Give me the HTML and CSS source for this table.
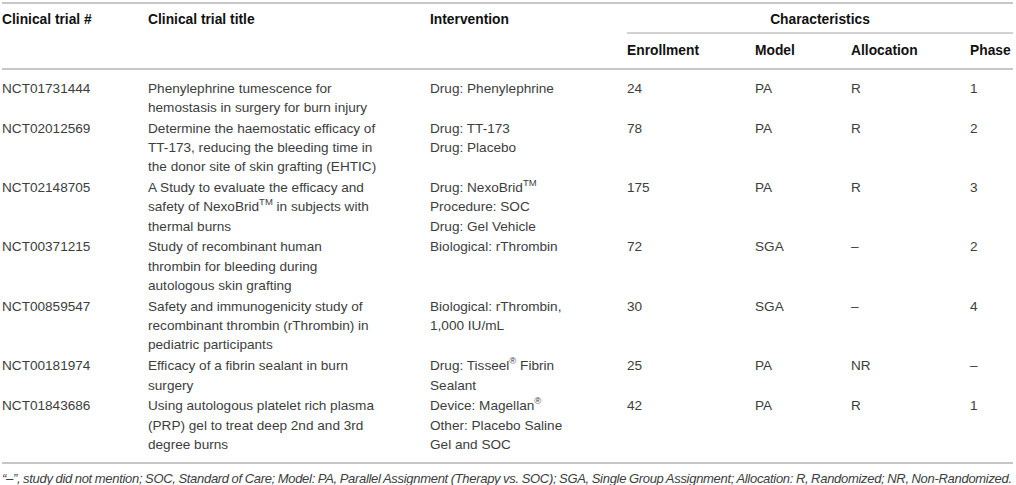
FILE: index.html
```html
<!DOCTYPE html>
<html>
<head>
<meta charset="utf-8">
<link rel="stylesheet" href="styles.css">
</head>
<body>
<div class="wrap">
<table class="trials">
  <colgroup>
    <col class="c-id"><col class="c-title"><col class="c-int"><col class="c-enr"><col class="c-model"><col class="c-alloc"><col class="c-phase">
  </colgroup>
  <thead>
    <tr class="h1">
      <th rowspan="2">Clinical trial #</th>
      <th rowspan="2">Clinical trial title</th>
      <th rowspan="2">Intervention</th>
      <th colspan="4" class="group">Characteristics</th>
    </tr>
    <tr class="h2">
      <th>Enrollment</th>
      <th>Model</th>
      <th>Allocation</th>
      <th>Phase</th>
    </tr>
  </thead>
  <tbody>
    <tr>
      <td>NCT01731444</td>
      <td class="title">Phenylephrine tumescence for<br>hemostasis in surgery for burn injury</td>
      <td class="title">Drug: Phenylephrine</td>
      <td>24</td><td>PA</td><td>R</td><td>1</td>
    </tr>
    <tr>
      <td>NCT02012569</td>
      <td class="title">Determine the haemostatic efficacy of<br>TT-173, reducing the bleeding time in<br>the donor site of skin grafting (EHTIC)</td>
      <td class="title">Drug: TT-173<br>Drug: Placebo</td>
      <td>78</td><td>PA</td><td>R</td><td>2</td>
    </tr>
    <tr>
      <td>NCT02148705</td>
      <td class="title">A Study to evaluate the efficacy and<br>safety of NexoBrid<sup>TM</sup> in subjects with<br>thermal burns</td>
      <td class="title">Drug: NexoBrid<sup>TM</sup><br>Procedure: SOC<br>Drug: Gel Vehicle</td>
      <td>175</td><td>PA</td><td>R</td><td>3</td>
    </tr>
    <tr>
      <td>NCT00371215</td>
      <td class="title">Study of recombinant human<br>thrombin for bleeding during<br>autologous skin grafting</td>
      <td class="title">Biological: rThrombin</td>
      <td>72</td><td>SGA</td><td>–</td><td>2</td>
    </tr>
    <tr>
      <td>NCT00859547</td>
      <td class="title">Safety and immunogenicity study of<br>recombinant thrombin (rThrombin) in<br>pediatric participants</td>
      <td class="title">Biological: rThrombin,<br>1,000 IU/mL</td>
      <td>30</td><td>SGA</td><td>–</td><td>4</td>
    </tr>
    <tr>
      <td>NCT00181974</td>
      <td class="title">Efficacy of a fibrin sealant in burn<br>surgery</td>
      <td class="title">Drug: Tisseel<sup>®</sup> Fibrin<br>Sealant</td>
      <td>25</td><td>PA</td><td>NR</td><td>–</td>
    </tr>
    <tr>
      <td>NCT01843686</td>
      <td class="title">Using autologous platelet rich plasma<br>(PRP) gel to treat deep 2nd and 3rd<br>degree burns</td>
      <td class="title">Device: Magellan<sup>®</sup><br>Other: Placebo Saline<br>Gel and SOC</td>
      <td>42</td><td>PA</td><td>R</td><td>1</td>
    </tr>
  </tbody>
</table>
<p class="note">“–”, study did not mention; SOC, Standard of Care; Model: PA, Parallel Assignment (Therapy vs. SOC); SGA, Single Group Assignment; Allocation: R, Randomized; NR, Non-Randomized.</p>
</div>
</body>
</html>
```

FILE: styles.css
```css
html, body {
  margin: 0;
  padding: 0;
  background: #ffffff;
}

body {
  font-family: "Liberation Sans", Arial, sans-serif;
  font-size: 13.6px;
  color: #3d3d3d;
}

.wrap {
  padding: 2px 0 0 2px;
  width: 1011px;
}

.trials {
  width: 1011px;
  border-collapse: collapse;
  table-layout: fixed;
  border-top: 2px solid #c6c6c6;
}

.c-id { width: 146px; }
.c-title { width: 282px; }
.c-int { width: 197px; }
.c-enr { width: 128px; }
.c-model { width: 96px; }
.c-alloc { width: 119px; }
.c-phase { width: 43px; }

th, td {
  padding: 0;
  text-align: left;
  vertical-align: top;
  line-height: 19.3px;
}

th {
  font-size: 13.8px;
  font-weight: bold;
  color: #111111;
}

.h1 th {
  padding-top: 6px;
}

.h1 th.group {
  text-align: center;
  padding-bottom: 3px;
  border-bottom: 2px solid #d2d2d2;
}

.h2 th {
  padding-top: 7px;
  padding-bottom: 7px;
}

thead {
  border-bottom: 2px solid #c6c6c6;
}

td {
  padding-top: 0.75px;
  padding-bottom: 0.75px;
}

td.title {
  white-space: nowrap;
}

tbody tr:first-child td {
  padding-top: 9px;
}

tbody tr:last-child td {
  padding-bottom: 8px;
}

sup {
  font-size: 9.5px;
  line-height: 0;
  vertical-align: 6px;
}

.note {
  margin: 0;
  border-top: 2px solid #c6c6c6;
  padding-top: 5px;
  font-size: 13px;
  font-style: italic;
  line-height: 19px;
  letter-spacing: -0.3px;
  word-spacing: -0.5px;
  white-space: nowrap;
  color: #3d3d3d;
}
```
